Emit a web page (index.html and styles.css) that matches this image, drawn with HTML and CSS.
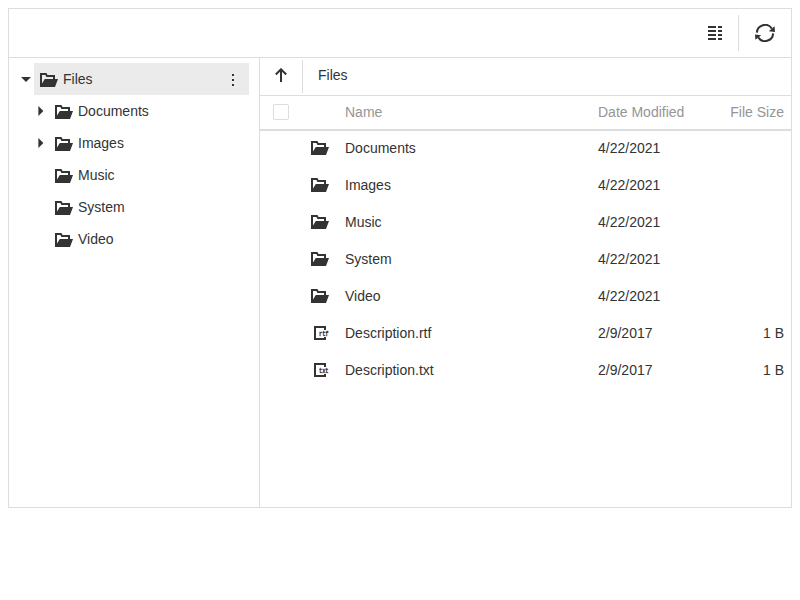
FILE: index.html
```html
<!DOCTYPE html>
<html lang="en">
<head>
<meta charset="utf-8">
<title>File Manager</title>
<link rel="stylesheet" href="styles.css">
</head>
<body>
<svg class="defs" width="0" height="0">
  <symbol id="folder" viewBox="0 0 18 14"><path fill-rule="evenodd" d="M0 0H6.5L7.5 2H15V6H18L15 14H0ZM2 2V10.5L4.8 6H13V4H6.4L5.4 2Z"/></symbol>
  <symbol id="file" viewBox="0 0 18 14"><path d="M3 0H15V4H13V2H5V12H13V11H15V14H3Z"/></symbol>
</svg>
<div class="manager">
  <div class="toolbar">
    <svg class="view" width="14" height="14"><path d="M0 0H8V2H0ZM10 0H14V2H10ZM0 4H8V6H0ZM10 4H14V6H10ZM0 8H8V10H0ZM10 8H14V10H10ZM0 12H8V14H0ZM10 12H14V14H10Z"/></svg>
    <span class="separator"></span>
    <svg class="refresh" width="20" height="18" viewBox="0 0 20 18"><path class="line" d="M1.9 8.6A8.1 8.1 0 0 1 16.8 4.6M18.1 9.4A8.1 8.1 0 0 1 3.2 13.4"/><path d="M19.6 2.2L20 8L13.8 7.2ZM.4 15.8L0 10.5L6.2 11.2Z"/></svg>
  </div>
  <div class="body">
    <div class="tree">
      <div class="node root"><svg class="toggle" width="10" height="5"><path d="M0 0H10L5 5Z"/></svg><div class="item selected"><svg class="icon"><use href="#folder"/></svg><span>Files</span><svg class="dots" width="2" height="12"><path d="M0 0H2V2H0ZM0 5H2V7H0ZM0 10H2V12H0Z"/></svg></div></div>
      <div class="node"><svg class="toggle" width="6" height="10"><path d="M.4 0L5.4 5L.4 10Z"/></svg><div class="item"><svg class="icon"><use href="#folder"/></svg><span>Documents</span></div></div>
      <div class="node"><svg class="toggle" width="6" height="10"><path d="M.4 0L5.4 5L.4 10Z"/></svg><div class="item"><svg class="icon"><use href="#folder"/></svg><span>Images</span></div></div>
      <div class="node"><div class="item"><svg class="icon"><use href="#folder"/></svg><span>Music</span></div></div>
      <div class="node"><div class="item"><svg class="icon"><use href="#folder"/></svg><span>System</span></div></div>
      <div class="node"><div class="item"><svg class="icon"><use href="#folder"/></svg><span>Video</span></div></div>
    </div>
    <div class="content">
      <div class="crumbs"><svg class="up" width="12" height="14"><path class="line" d="M6 14V1.5M.8 6.5L6 1.3L11.2 6.5"/></svg><span class="separator"></span><span class="crumb">Files</span></div>
      <div class="row head"><span class="check"></span><span></span><span>Name</span><span>Date Modified</span><span class="size">File Size</span></div>
      <div class="row"><span></span><svg class="icon"><use href="#folder"/></svg><span>Documents</span><span>4/22/2021</span><span class="size"></span></div>
      <div class="row"><span></span><svg class="icon"><use href="#folder"/></svg><span>Images</span><span>4/22/2021</span><span class="size"></span></div>
      <div class="row"><span></span><svg class="icon"><use href="#folder"/></svg><span>Music</span><span>4/22/2021</span><span class="size"></span></div>
      <div class="row"><span></span><svg class="icon"><use href="#folder"/></svg><span>System</span><span>4/22/2021</span><span class="size"></span></div>
      <div class="row"><span></span><svg class="icon"><use href="#folder"/></svg><span>Video</span><span>4/22/2021</span><span class="size"></span></div>
      <div class="row"><span></span><svg class="icon"><use href="#file"/><text x="8" y="10" textLength="9.5" lengthAdjust="spacingAndGlyphs">rtf</text></svg><span>Description.rtf</span><span>2/9/2017</span><span class="size">1 B</span></div>
      <div class="row"><span></span><svg class="icon"><use href="#file"/><text x="8" y="10" textLength="9.5" lengthAdjust="spacingAndGlyphs">txt</text></svg><span>Description.txt</span><span>2/9/2017</span><span class="size">1 B</span></div>
    </div>
  </div>
</div>
</body>
</html>
```

FILE: styles.css
```css
* { box-sizing: border-box; }
body { margin: 8px; color: #333; font: 14px/18px "Liberation Sans", Arial, sans-serif; background: #fff; }
svg { display: block; flex: none; fill: #333; }
.defs { position: absolute; }
.line { fill: none; stroke: #333; stroke-width: 2; }
.manager { width: 784px; height: 500px; border: 1px solid #ddd; display: flex; flex-direction: column; }
.toolbar { height: 49px; flex: none; border-bottom: 1px solid #ddd; display: flex; align-items: center; justify-content: flex-end; padding-right: 16px; }
.separator { width: 1px; height: 36px; background: #ddd; margin: 0 16px; }
.body { flex: 1; display: flex; }
.tree { width: 250px; flex: none; padding: 5px 10px 0; }
.node { height: 32px; display: grid; grid-template-columns: 30px 1fr; align-items: center; }
.node.root { grid-template-columns: 15px 1fr; }
.toggle { margin-left: 19px; }
.root .toggle { margin-left: 2px; }
.item { grid-column: 2; height: 32px; display: flex; align-items: center; padding-left: 6px; gap: 5px; }
.selected { background: #ebebeb; }
.icon { width: 18px; height: 14px; overflow: visible; }
.item .icon { margin-top: 2px; }
.dots { margin: 2px 15px 0 auto; }
.content { flex: 1; min-width: 0; border-left: 1px solid #ddd; }
.crumbs { height: 38px; display: flex; align-items: center; border-bottom: 1px solid #ddd; padding-left: 15px; }
.up { margin-top: -4px; }
.crumbs .separator { height: 33px; margin: 0 15px; }
.crumb { margin-top: -3px; }
.row { height: 37px; display: grid; grid-template-columns: 38px 34px 253px 100px 86px; align-items: center; padding: 0 7px 3px 13px; }
.head { height: 35px; color: #959595; border-bottom: 2px solid #ddd; padding-bottom: 1px; }
.check { width: 16px; height: 16px; border: 1px solid #ddd; border-radius: 2px; }
.size { text-align: right; }
.icon text { font: bold 8px "Liberation Mono", monospace; stroke: #333; stroke-width: .3px; }
```
